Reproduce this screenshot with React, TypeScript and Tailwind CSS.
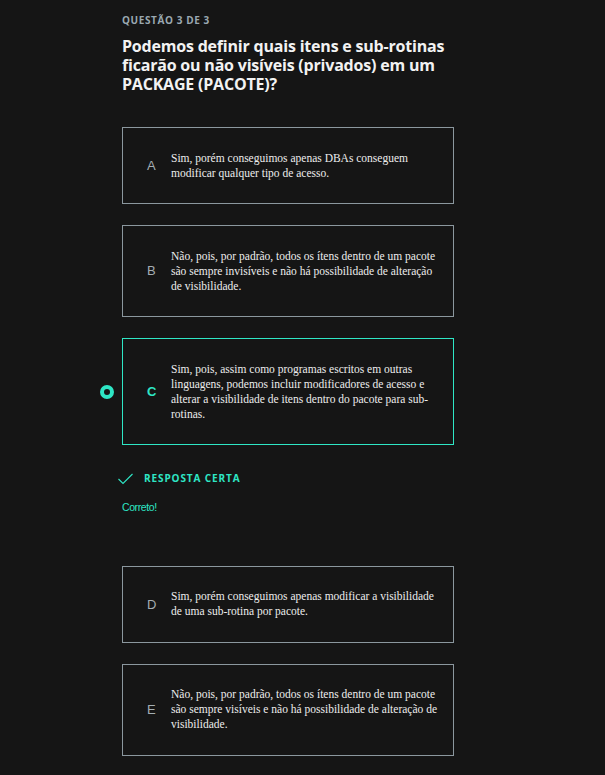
import React from "react"

type Option = {
  letter: string
  text: string
  selected?: boolean
}

const options: Option[] = [
  { letter: "A", text: "Sim, porém conseguimos apenas DBAs conseguem modificar qualquer tipo de acesso." },
  {
    letter: "B",
    text: "Não, pois, por padrão, todos os ítens dentro de um pacote são sempre invisíveis e não há possibilidade de alteração de visibilidade.",
  },
  {
    letter: "C",
    text: "Sim, pois, assim como programas escritos em outras linguagens, podemos incluir modificadores de acesso e alterar a visibilidade de itens dentro do pacote para sub-rotinas.",
    selected: true,
  },
  { letter: "D", text: "Sim, porém conseguimos apenas modificar a visibilidade de uma sub-rotina por pacote." },
  {
    letter: "E",
    text: "Não, pois, por padrão, todos os ítens dentro de um pacote são sempre visíveis e não há possibilidade de alteração de visibilidade.",
  },
]

function OptionCard({ option }: { option: Option }) {
  return (
    <div className="relative">
      {option.selected && (
        <span className="absolute left-[-22px] top-1/2 -translate-y-1/2 w-[14px] h-[14px] rounded-full border-[4px] border-[#2ee6c5]" />
      )}
      <div
        className={`flex items-center border py-[22.5px] pl-[24px] pr-[16px] ${
          option.selected ? "border-[#2ee6c5]" : "border-[#8b979e]"
        }`}
      >
        <span
          className={`w-[24px] shrink-0 text-[13px] font-['Liberation_Sans',sans-serif] ${
            option.selected ? "text-[#2ee6c5] font-bold" : "text-[#a3adb3]"
          }`}
        >
          {option.letter}
        </span>
        <p className="text-[11.5px] leading-[15px] text-[#ededed] font-['Liberation_Serif',serif]">{option.text}</p>
      </div>
    </div>
  )
}

export default function App() {
  return (
    <div className="min-h-[775px] w-full bg-[#151515] font-['Open_Sans',sans-serif]">
      <div className="w-[332px] ml-[122px] pt-[13px] pb-[20px]">
        <div className="text-[10px] font-bold tracking-[0.6px] text-[#9aa8b1]">QUESTÃO 3 DE 3</div>
        <h1 className="mt-[9px] text-[16px] leading-[19px] font-bold text-[#f2f2f2] tracking-[-0.2px]">
          Podemos definir quais itens e sub-rotinas ficarão ou não visíveis (privados) em um PACKAGE (PACOTE)?
        </h1>

        <div className="mt-[33px] flex flex-col gap-[21px]">
          {options.slice(0, 3).map((o) => (
            <OptionCard key={o.letter} option={o} />
          ))}
        </div>

        <div className="mt-[26px] ml-[-4px] flex items-center gap-[11px]">
          <svg width="15" height="12" viewBox="0 0 15 12" fill="none">
            <path d="M0.5 6 L5 10.5 L14.5 1" stroke="#2ee6c5" strokeWidth="1.1" />
          </svg>
          <span className="text-[10px] font-bold tracking-[0.9px] text-[#2ee6c5]">RESPOSTA CERTA</span>
        </div>
        <p className="mt-[14px] text-[10.5px] text-[#2ee6c5] tracking-[-0.4px] font-['Liberation_Sans_Narrow','Liberation_Sans',sans-serif]">
          Correto!
        </p>

        <div className="mt-[50px] flex flex-col gap-[21px]">
          {options.slice(3).map((o) => (
            <OptionCard key={o.letter} option={o} />
          ))}
        </div>
      </div>
    </div>
  )
}
